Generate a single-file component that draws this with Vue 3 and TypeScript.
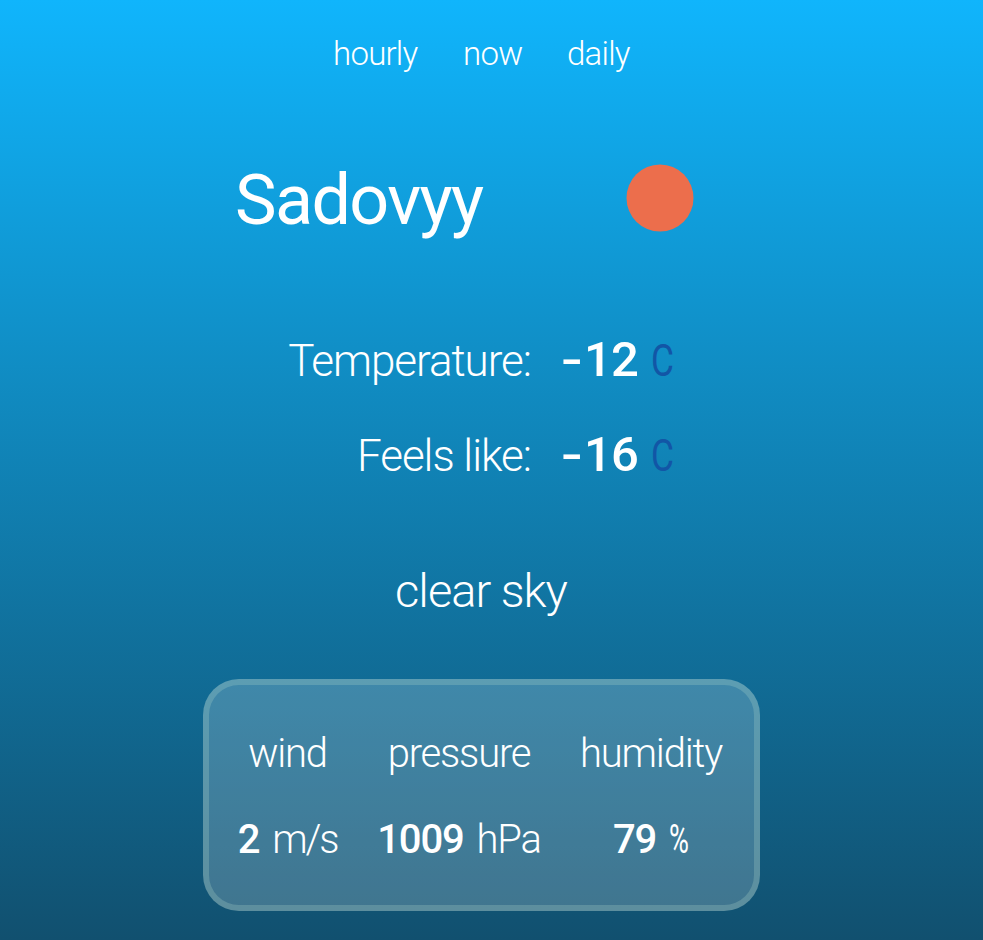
<script setup lang="ts">
interface Reading { label: string; sign: string; value: string; kind: string }
interface Detail { label: string; value: string; unit: string; kind: string }

const tabs: string[] = ['hourly', 'now', 'daily']
const readings: Reading[] = [
  { label: 'Temperature:', sign: '-', value: '12', kind: 'actual' },
  { label: 'Feels like:', sign: '-', value: '16', kind: 'feels' },
]
const details: Detail[] = [
  { label: 'wind', value: '2', unit: 'm/s', kind: 'wind' },
  { label: 'pressure', value: '1009', unit: 'hPa', kind: 'pressure' },
  { label: 'humidity', value: '79', unit: '%', kind: 'humidity' },
]
</script>

<template>
  <main class="weather">
    <nav class="tabs">
      <a v-for="tab in tabs" :key="tab" :class="['tab', tab]">{{ tab }}</a>
    </nav>
    <header class="place">
      <h1>Sadovyy</h1>
      <svg class="sun" viewBox="0 0 68 68"><circle cx="34" cy="34" r="33.5" fill="#ec6e4c" /></svg>
    </header>
    <section class="readings">
      <div v-for="r in readings" :key="r.kind" :class="['reading', r.kind]">
        <span class="label">{{ r.label }}</span>
        <span class="value"><span class="sign">{{ r.sign }}</span>{{ r.value }}</span>
        <span class="degree">C</span>
      </div>
    </section>
    <p class="sky">clear sky</p>
    <section class="details">
      <div v-for="d in details" :key="d.kind" :class="['detail', d.kind]">
        <span class="name">{{ d.label }}</span>
        <span class="amount"><b>{{ d.value }}</b><span class="unit">{{ d.unit }}</span></span>
      </div>
    </section>
  </main>
</template>

<style>
body { margin: 0; }
</style>

<style scoped>
.weather {
  box-sizing: border-box;
  height: 940px;
  overflow: hidden;
  color: #fff;
  font-family: Roboto, "Open Sans", sans-serif;
  font-weight: 300;
  background: linear-gradient(#10b5fc, #1092cb 34%, #11506f);
}
.tabs { display: flex; height: 108px; padding-left: 333px; font-size: 33px; line-height: 108px; letter-spacing: -.75px; }
.tab.hourly { width: 130px; }
.tab.now { width: 104px; }
.place { display: flex; height: 180px; align-items: center; }
h1 { box-sizing: border-box; margin: 0; width: 626px; padding: 4px 0 0 235px; font-size: 70px; line-height: 84px; font-weight: 400; letter-spacing: -1.6px; }
.sun { width: 68px; height: 68px; }
.readings { padding-top: 24px; }
.reading { display: flex; height: 95px; align-items: baseline; font-size: 44px; line-height: 95px; }
.label { width: 531px; text-align: right; letter-spacing: -1.05px; }
.value { display: flex; width: 90px; margin-left: 30px; font-weight: 500; font-size: 49px; letter-spacing: -.8px; }
.sign { width: 23px; transform: scaleX(1.3); transform-origin: left; }
.degree { color: #1256a6; font-weight: 400; transform: scaleX(.8); transform-origin: left; }
.sky { width: 962px; height: 177px; margin: 0; text-align: center; font-size: 47px; line-height: 178px; letter-spacing: -1px; }
.details {
  display: flex;
  box-sizing: border-box;
  width: 557px;
  height: 232px;
  margin-left: 203px;
  padding: 26px 0 0 14px;
  border: 6px solid rgba(178, 218, 205, .25);
  border-radius: 36px;
  background: rgba(255, 255, 255, .2);
  font-size: 40px;
}
.detail { display: flex; flex-direction: column; align-items: center; white-space: nowrap; letter-spacing: -1.2px; }
.wind { width: 129px; }
.pressure { width: 214px; }
.humidity { width: 170px; }
.name, .amount { line-height: 86px; }
.amount { display: flex; align-items: baseline; gap: 13px; }
b { font-weight: 500; }
.wind .unit { letter-spacing: -2.2px; }
.humidity .unit { width: 20px; font-weight: 400; transform: scaleX(.68); transform-origin: left; }
</style>
